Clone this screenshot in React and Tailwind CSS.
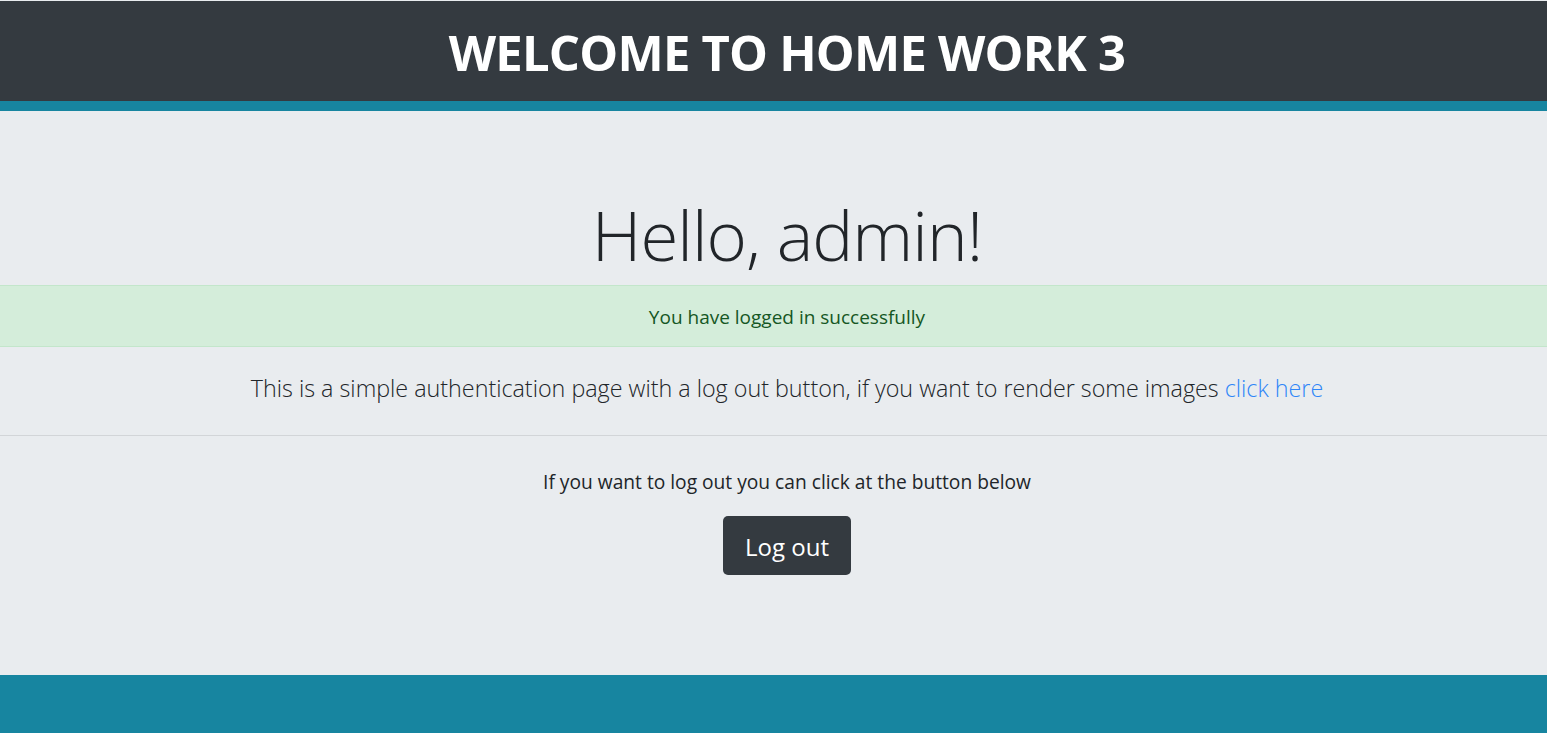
export default function App() {
  const font = { fontFamily: '"Open Sans", "Noto Sans", sans-serif' };
  return (
    <div className="min-h-screen bg-[#e9ecef] text-[#212529] overflow-hidden" style={font}>
      <div className="h-px bg-[#e9ecef]" />
      <header className="h-[100px] bg-[#343a40] flex items-center justify-center pl-[27px] pt-[2px]">
        <h1 className="text-[49px] font-bold text-white leading-none tracking-[-0.8px]">WELCOME TO HOME WORK 3</h1>
      </header>
      <div className="h-[10px] bg-[#1785a0]" />
      <main className="pt-[83px] pb-[100px] text-center">
        <h2 className="pl-[27px] text-[69px] font-light leading-[80px] mb-[11px] tracking-[-1px]">Hello, admin!</h2>
        <div className="h-[62px] pl-[27px] pt-[2px] bg-[#d4edda] border-y border-[#c3e6cb] text-[#155724] text-[19px] flex items-center justify-center">
          You have logged in successfully
        </div>
        <p className="pl-[27px] pt-[26px] text-[23.3px] font-light leading-[30px]">
          This is a simple authentication page with a log out button, if you want to render some images{' '}
          <a href="#" className="text-[#2f86f8]">click here</a>
        </p>
        <hr className="mt-[32px] border-0 h-px bg-[#d2d5d8]" />
        <p className="pl-[27px] pt-[34px] text-[19.2px] leading-[24px]">If you want to log out you can click at the button below</p>
        <div className="pl-[27px]">
          <button className="mt-[22px] w-[128px] h-[59px] pt-[2px] rounded-[5px] bg-[#343a40] text-white text-[24px]">Log out</button>
        </div>
      </main>
      <footer className="h-[58px] bg-[#1785a0]" />
    </div>
  );
}
